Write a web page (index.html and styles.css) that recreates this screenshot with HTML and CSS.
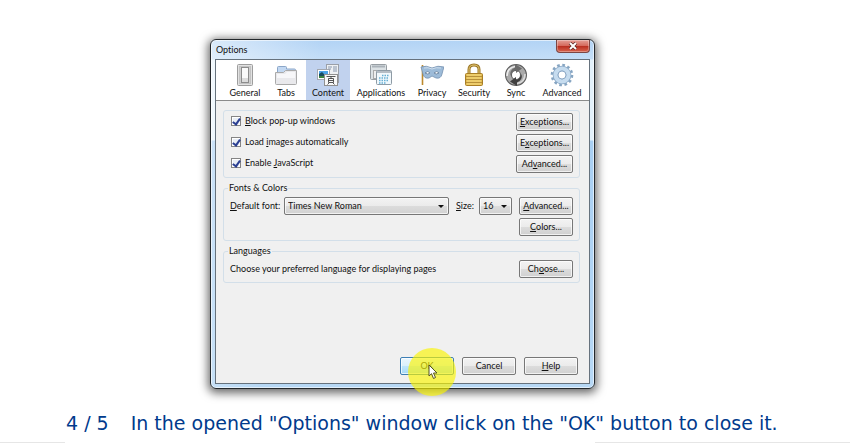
FILE: index.html
```html
<!DOCTYPE html>
<html lang="en">
<head>
    <meta charset="UTF-8">
    <meta name="viewport" content="width=device-width, initial-scale=1.0">
    <title>Options</title>
    <link rel="stylesheet" href="styles.css">
</head>
<body>
    <main class="slide">
        <div class="stage">
            <section class="window" aria-label="Options">
                <header class="titlebar">
                    <h1>Options</h1>
                    <button class="close" type="button" aria-label="Close">
                        <svg width="10" height="8" viewBox="0 0 10 8"><path d="M2 1l6 6M8 1L2 7" stroke="#5d2420" stroke-width="3.4"/><path d="M2 1l6 6M8 1L2 7" stroke="#fff" stroke-width="2"/></svg>
                    </button>
                </header>

                <div class="client">
                    <!-- category toolbar -->
                    <nav class="toolbar">
                        <button class="tab" type="button">
                            <svg viewBox="0 0 24 24"><rect x="4.5" y="1.5" width="15" height="21" rx="1" fill="#e2e2e2" stroke="#9d9d9d"/><rect x="6.5" y="3.5" width="11" height="17" fill="#cfcfcf" stroke="#c3c3c3"/><rect x="8.5" y="4.5" width="7" height="15" fill="#fafafa" stroke="#8c8c8c"/><path d="M9 15h6v4H9z" fill="#dcdcdc"/></svg>
                            <span>General</span>
                        </button>
                        <button class="tab" type="button">
                            <svg viewBox="0 0 24 24"><path d="M3.5 9V4.500q0-1 1-1h7q1 0 1 1V6H20.500q1 0 1 1v4h-18z" fill="#c2d8f2" stroke="#8ba6c8"/><path d="M1.5 9.500h8l2-2h11v13q0 1-1 1h-19q-1 0-1-1z" fill="#e9e9ec" stroke="#aaa"/><path d="M3 11h8l2-2h8v6H3z" fill="#f7f7f9"/></svg>
                            <span>Tabs</span>
                        </button>
                        <button class="tab active" type="button">
                            <svg viewBox="0 0 24 24"><rect x="10.5" y="1.5" width="12" height="18" fill="#eef0f3" stroke="#9a9fa8"/><path d="M12 4h4M12 6h3M17 4h4M17 6h4M17 8h4" stroke="#8796ad"/><rect x="1.5" y="6.5" width="12" height="10" fill="#fff" stroke="#a4a8b0"/><path d="M3 8h9v4H3z" fill="#4ba3e8"/><path d="M3 11l3-2 3 3h3v3H3z" fill="#174b60"/><path d="M3 13h9v2H3z" fill="#3b843d"/><rect x="8.5" y="11.5" width="13" height="11" fill="#f8f8f8" stroke="#909090"/><path d="M10.500 13.500h9M15 13.500v2M12.500 15.500h5v4h-5zM12.500 17.500h5M13.500 19.500l-2 2M16.500 19.500l2 2" fill="none" stroke="#444" stroke-width=".9"/></svg>
                            <span>Content</span>
                        </button>
                        <button class="tab" type="button">
                            <svg viewBox="0 0 24 24"><rect x="1.5" y="1.5" width="16" height="15" rx="1" fill="#dce2e5" stroke="#979ea3"/><path d="M3 3.500h13" stroke="#aab2b9" stroke-width="2"/><rect x="4.5" y="7.5" width="10" height="8" fill="#eee" stroke="#aaa"/><rect x="7.5" y="7.5" width="15" height="14" rx="1" fill="#f1f8fc" stroke="#8e9ba5"/><path d="M8 9h14" stroke="#b5bdc5" stroke-width="2"/><path d="M13 12.500h7M10 15h10M10 17.500h10M10 20h7" stroke="#66afd4" stroke-width="1.5" stroke-dasharray="1.5 1"/></svg>
                            <span>Applications</span>
                        </button>
                        <button class="tab" type="button">
                            <svg viewBox="0 0 24 24"><path d="M2.500 2v20" stroke="#bc892d" stroke-width="1.6"/><path d="M1 4q5-2 11 1 6-3 12-1-1 3-2 7-1 5-6 4l-4-2-3 2q-5 1-6-4z" fill="#9dbbd8" stroke="#7590b0" stroke-width=".8"/><path d="M4 5q4-1 8 1 4-2 9-1" fill="none" stroke="#cfdfee"/><path d="M5 10q3-3 5 0-2 2-5 0M14 10q3-3 5 0-3 2-5 0" fill="#fff" stroke="#526d8b" stroke-width=".7"/></svg>
                            <span>Privacy</span>
                        </button>
                        <button class="tab" type="button">
                            <svg viewBox="0 0 24 24"><path d="M7 12V6.500Q7 2 12 2t5 4.500V12" fill="none" stroke="#9b7624" stroke-width="3"/><path d="M7 12V6.500Q7 2 12 2t5 4.500V12" fill="none" stroke="#e7cb78" stroke-width="1"/><rect x="3.5" y="10.5" width="17" height="12" rx="1" fill="#e3bd54" stroke="#a97e25"/><path d="M4 13.500h16M4 16.500h16M4 19.500h16" stroke="#b8903a"/><path d="M5 12h14M5 15h14M5 18h14M5 21h14" stroke="#f7dc83"/></svg>
                            <span>Security</span>
                        </button>
                        <button class="tab" type="button">
                            <svg viewBox="0 0 24 24"><circle cx="12" cy="12" r="7.5" fill="none" stroke="#5c5c5c" stroke-width="7"/><circle cx="12" cy="12" r="7.5" fill="none" stroke="#a9a9a9" stroke-width="5"/><path d="M3 13Q3 5 11 3.500" fill="none" stroke="#ececec" stroke-width="1.6"/><path d="M21 11q0 8-8 9.500" fill="none" stroke="#d9d9d9" stroke-width="1.6"/><path d="M11 1l7 4.500-6 4.500V7Q8 8 6.500 13 5 7 11 4.500z" fill="#6b6b6b"/><path d="M13 23l-7-4.500 6-4.500v3q4-1 5.500-6 1.500 6-4.500 8.500z" fill="#3f3f3f"/></svg>
                            <span>Sync</span>
                        </button>
                        <button class="tab" type="button">
                            <svg viewBox="0 0 24 24"><circle cx="12" cy="12" r="9.800" fill="none" stroke="#86a5c2" stroke-width="3" stroke-dasharray="2.6 2.531"/><circle cx="12" cy="12" r="6.500" fill="none" stroke="#8aa9c7" stroke-width="5.600"/><circle cx="12" cy="12" r="6.500" fill="none" stroke="#c6dcef" stroke-width="4.200"/><circle cx="12" cy="12" r="4" fill="#fff" stroke="#8eaac7"/></svg>
                            <span>Advanced</span>
                        </button>
                    </nav>

                    <form class="panel">
                        <fieldset class="group">
                            <div class="row">
                                <label class="check"><input type="checkbox" checked><span><u>B</u>lock pop-up windows</span></label>
                                <button class="btn wide" type="button"><u>E</u>xceptions...</button>
                            </div>
                            <div class="row">
                                <label class="check"><input type="checkbox" checked><span>Load <u>i</u>mages automatically</span></label>
                                <button class="btn wide" type="button">E<u>x</u>ceptions...</button>
                            </div>
                            <div class="row">
                                <label class="check"><input type="checkbox" checked><span>Enable <u>J</u>avaScript</span></label>
                                <button class="btn wide" type="button">Ad<u>v</u>anced...</button>
                            </div>
                        </fieldset>

                        <fieldset class="group titled">
                            <legend>Fonts &amp; Colors</legend>
                            <div class="row">
                                <label class="font-label" for="font"><u>D</u>efault font:</label>
                                <div class="drop font-drop">
                                    <select id="font"><option>Times New Roman</option></select>
                                </div>
                                <label class="size-label" for="size"><u>S</u>ize:</label>
                                <div class="drop size-drop">
                                    <select id="size"><option>16</option></select>
                                </div>
                                <button class="btn" type="button"><u>A</u>dvanced...</button>
                            </div>
                            <div class="row end">
                                <button class="btn" type="button"><u>C</u>olors...</button>
                            </div>
                        </fieldset>

                        <fieldset class="group titled">
                            <legend>Languages</legend>
                            <div class="row">
                                <span>Choose your preferred language for displaying pages</span>
                                <button class="btn" type="button">Ch<u>o</u>ose...</button>
                            </div>
                        </fieldset>

                        <div class="actions">
                            <div class="target">
                                <button class="btn default" type="button">OK</button>
                                <!-- click highlight and pointer -->
                                <div class="spot"></div>
                                <svg class="pointer" width="10" height="16" viewBox="0 0 10 16"><path d="M1 1v11l2.500-2.300L5.500 14.500l2-1L5.500 9H9z" fill="#fff" stroke="#55551f"/></svg>
                            </div>
                            <button class="btn" type="button">Cancel</button>
                            <button class="btn" type="button"><u>H</u>elp</button>
                        </div>
                    </form>
                </div>
            </section>
        </div>
        <p class="caption"><span>4 / 5</span><span>In the opened "Options" window click on the "OK" button to close it.</span></p>
        <div class="edges"><i></i><i></i></div>
    </main>
</body>
</html>
```
FILE: styles.css
```css
* {
    box-sizing: border-box;
}

body {
    margin: 0;
    background: #fff;
    color: #111;
    font-family: Lato, "Open Sans", sans-serif;
    font-size: 9px;
    line-height: 12px;
    font-variant-ligatures: none;
}

button, select, input {
    font: inherit;
    font-variant-ligatures: none;
    color: inherit;
    margin: 0;
}

u {
    text-underline-offset: 1px;
}

.slide {
    display: flex;
    flex-direction: column;
    min-height: 100vh;
    padding-top: 39px;
}

.stage {
    display: flex;
    justify-content: center;
    padding-right: 45px;
}

/* window frame */
.window {
    width: 100%;
    max-width: 385px;
    padding: 0 4px 4px;
    border: 1px solid #24282c;
    border-radius: 6px;
    background:
        linear-gradient(100deg, rgba(255, 255, 255, 0.5), rgba(255, 255, 255, 0) 25%),
        linear-gradient(#b2d3f5 0, #c4def7 19px, #e3f1fb 20px, #e3f1fb 100px, #a8cff3 101px, #b7d8f5);
    box-shadow: 0 2px 10px 2px rgba(0, 0, 0, 0.6), inset 0 0 0 1px rgba(255, 255, 255, 0.6);
}

.titlebar {
    display: flex;
    justify-content: space-between;
    align-items: flex-start;
    height: 19px;
}

.titlebar h1 {
    margin: 4px 0 0 1px;
    font-size: 9px;
    font-weight: normal;
    line-height: 12px;
}

.close {
    display: flex;
    align-items: center;
    justify-content: center;
    width: 34px;
    height: 13px;
    padding: 0;
    border: 1px solid #7c4643;
    border-top: 0;
    border-radius: 0 0 4px 4px;
    background: linear-gradient(#e5a097, #d5695c 48%, #b92e20 52%, #d8644e);
    box-shadow: inset 0 0 0 1px rgba(255, 255, 255, 0.3);
}

.client {
    display: flex;
    flex-direction: column;
    min-height: 325px;
    border: 1px solid #66727d;
    background: #f0f0f0;
}

/* toolbar */
.toolbar {
    display: grid;
    grid-template-columns: 42fr 40fr 44fr 62fr 40fr 44fr 40fr 52fr;
    padding: 0 1px 0 8px;
    height: 41px;
    border-bottom: 1px solid #8b8b8b;
    background: #fff;
}

.tab {
    display: flex;
    flex-direction: column;
    align-items: center;
    padding: 3px 0 0;
    border: 0;
    background: none;
    line-height: 12px;
    white-space: nowrap;
}

.tab.active {
    background: #c1d2ee;
}

.tab svg {
    display: block;
    width: 24px;
    height: 24px;
}

/* settings */
.panel {
    display: flex;
    flex-direction: column;
    flex: 1;
    padding: 9px 9px 8px 7px;
}

.group {
    display: flex;
    flex-direction: column;
    gap: 3px;
    min-width: 0;
    margin: 0 0 4px;
    padding: 2px 6px 4px;
    border: 1px solid #d3dfe9;
    border-radius: 3px;
}

.group.titled {
    padding-top: 3px;
}

.group legend {
    margin-left: -2px;
    padding: 0 1px;
    line-height: 12px;
}

.row {
    display: flex;
    align-items: center;
    justify-content: space-between;
    height: 18px;
}

.row.end {
    justify-content: flex-end;
}

.check {
    display: flex;
    align-items: center;
    gap: 4px;
    padding: 0 0 3px 1px;
}

.check input {
    appearance: none;
    display: grid;
    place-items: center;
    width: 10px;
    height: 10px;
    border: 1px solid #858585;
    background: #e9eef5;
    box-shadow: inset 0 0 0 1px #fff;
}

.check input:checked::after {
    content: "";
    width: 3px;
    height: 6px;
    border: solid #2b3f92;
    border-width: 0 2px 2px 0;
    transform: rotate(35deg);
}

.btn {
    width: 54px;
    height: 18px;
    padding: 0;
    border: 1px solid #777;
    border-radius: 2px;
    background: linear-gradient(#f3f3f3, #ebebeb 50%, #dcdcdc 51%, #d0d0d0);
    box-shadow: inset 0 0 0 1px rgba(255, 255, 255, 0.7);
    line-height: 14px;
    white-space: nowrap;
}

.btn.wide {
    width: 57px;
}

.btn.default {
    border-color: #3d7fb5;
    background: linear-gradient(#eaf6fd, #d9f0fc 50%, #bee6fd 51%, #a7d9f5);
}

.drop {
    position: relative;
}

.drop::after {
    content: "";
    position: absolute;
    right: 5px;
    top: 8px;
    width: 6px;
    height: 3px;
    background: #111;
    clip-path: polygon(0 0, 100% 0, 50% 100%);
    pointer-events: none;
}

.drop select {
    appearance: none;
    display: block;
    width: 100%;
    height: 18px;
    padding: 0 3px;
    border: 1px solid #777;
    border-radius: 2px;
    background: linear-gradient(#f3f3f3, #ebebeb 50%, #dcdcdc 51%, #d2d2d2);
    box-shadow: inset 0 0 0 1px rgba(255, 255, 255, 0.7);
}

.font-label {
    width: 54px;
    white-space: nowrap;
}

.font-drop {
    flex: 1;
}

.size-label {
    width: 30px;
    padding-left: 7px;
}

.size-drop {
    width: 33px;
    margin-right: 7px;
}

.actions {
    display: flex;
    justify-content: flex-end;
    gap: 8px;
    margin-top: auto;
    padding-right: 2px;
}

.target {
    position: relative;
}

.spot {
    position: absolute;
    left: 8px;
    top: -9px;
    width: 48px;
    height: 48px;
    border-radius: 50%;
    background: rgba(250, 245, 0, 0.65);
    pointer-events: none;
}

.pointer {
    position: absolute;
    left: 28px;
    top: 7px;
    pointer-events: none;
}

/* step caption */
.caption {
    display: flex;
    gap: 22px;
    margin: 22px 0 0 66px;
    color: #003a8c;
    font-family: Verdana, "DejaVu Sans", sans-serif;
    font-size: 19px;
    line-height: 24px;
}

.edges {
    display: flex;
    justify-content: space-between;
    margin-top: auto;
}

.edges i {
    width: 30%;
    height: 1px;
    background: #e6e6e6;
}

.edges i:first-child {
    width: 65px;
}
```
